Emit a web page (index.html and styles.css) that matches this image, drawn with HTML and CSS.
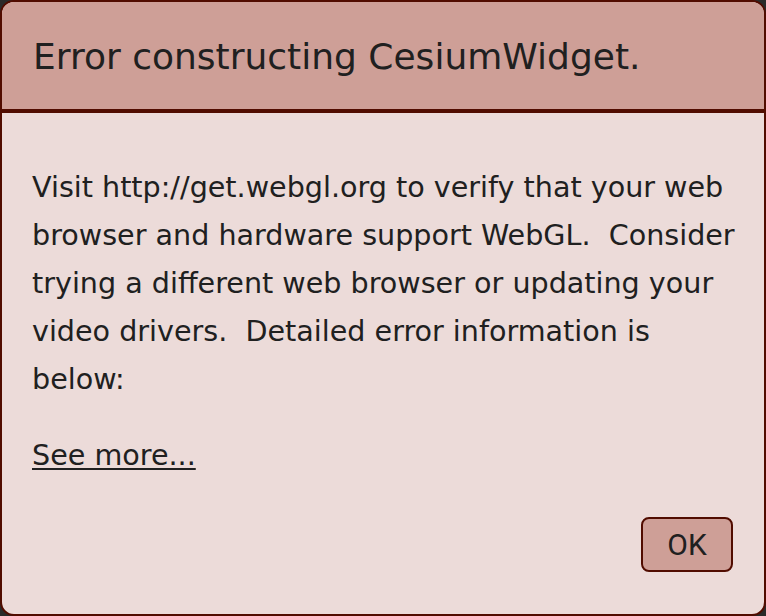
FILE: index.html
```html
<!DOCTYPE html>
<html>
<head>
<meta charset="utf-8">
<link rel="stylesheet" href="styles.css">
</head>
<body>
<div class="panel">
  <div class="header">Error constructing CesiumWidget.</div>
  <div class="scroll">
    <div class="message">Visit <a class="link" href="#">http://get.webgl.org</a> to verify that your web browser and hardware support WebGL.  Consider trying a different web browser or updating your video drivers.  Detailed error information is below:</div>
    <div class="more"><span class="more-details">See more...</span></div>
  </div>
  <div class="buttons"><button class="ok">OK</button></div>
</div>
</body>
</html>
```
FILE: styles.css
```css
html, body {
  margin: 0;
  padding: 0;
  background: #2a2a2a;
}
.panel {
  box-sizing: border-box;
  width: 766px;
  height: 616px;
  border: 2px solid #510c00;
  border-radius: 14px;
  background: #ecdbd9;
  color: #202020;
  font-family: "DejaVu Sans", Verdana, sans-serif;
  display: flex;
  flex-direction: column;
  overflow: hidden;
}
.header {
  background: #ce9f97;
  border-bottom: 4px solid #510c00;
  padding: 31px 30px 29px 31px;
  font-size: 36px;
  line-height: 47px;
}
.scroll {
  padding: 0 14px 0 30px;
  margin-top: 50px;
  font-size: 28.6px;
  line-height: 48px;
}
.message {
  white-space: pre-wrap;
}
.link {
  color: #202020;
  text-decoration: none;
}
.more {
  margin-top: 28px;
}
.more-details {
  text-decoration: underline;
  text-decoration-thickness: 2px;
  text-underline-offset: 3px;
}
.buttons {
  margin-top: auto;
  padding: 0 31px 42px 0;
  display: flex;
  justify-content: flex-end;
}
.ok {
  width: 92px;
  height: 55px;
  box-sizing: border-box;
  border: 2px solid #510c00;
  border-radius: 8px;
  background: #ce9f97;
  color: #202020;
  font-family: Roboto, "Liberation Sans", sans-serif;
  font-size: 30px;
  padding: 0;
}
```
